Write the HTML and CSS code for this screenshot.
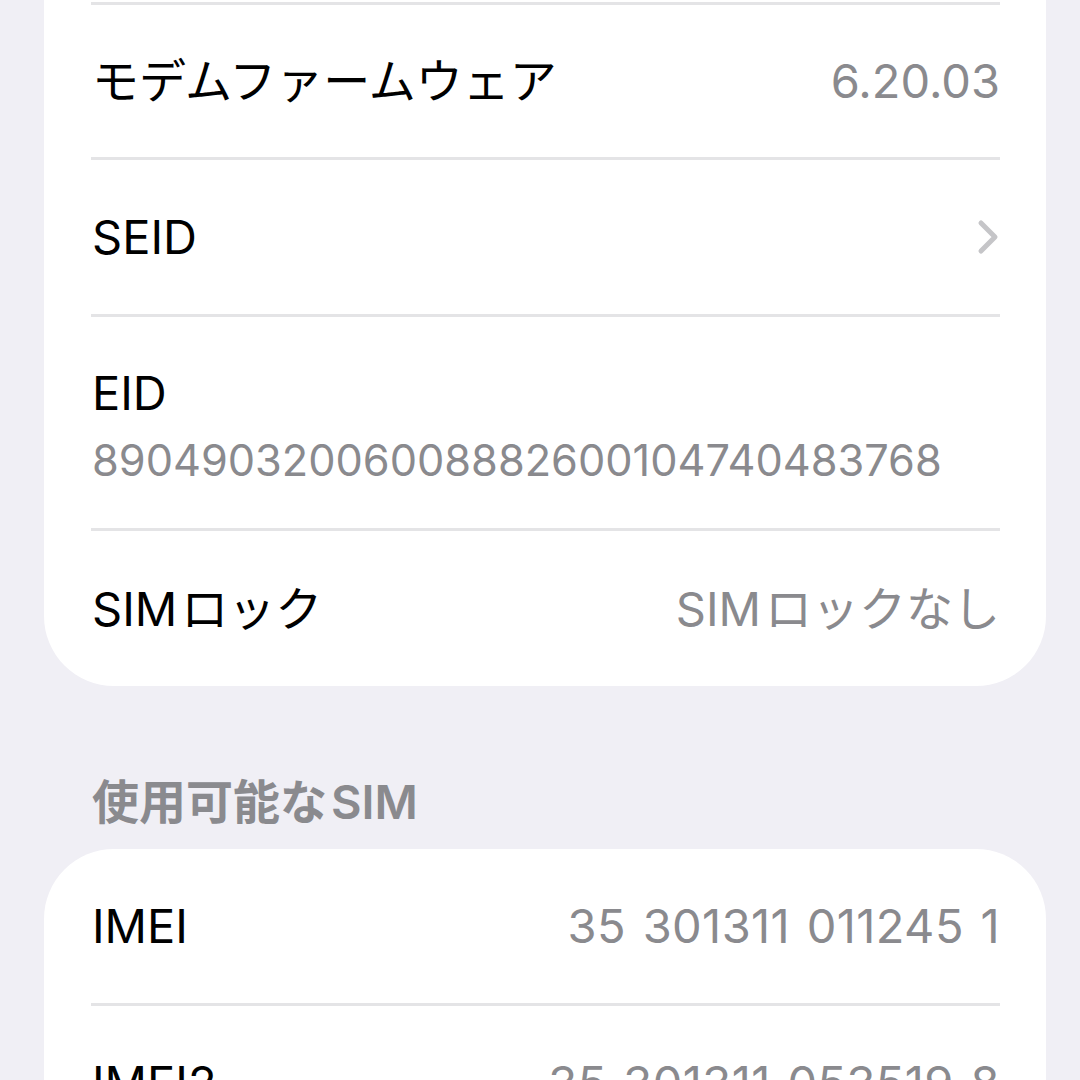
FILE: index.html
```html
<!DOCTYPE html>
<html lang="ja">
<head>
    <meta charset="UTF-8">
    <meta name="viewport" content="width=device-width, initial-scale=1.0">
    <title>情報</title>
    <link rel="stylesheet" href="styles.css">
</head>
<body>
    <div class="page">
        <div class="group group-top">
            <div class="row first">
                <span class="label">モデムファームウェア</span>
                <span class="value">6.20.03</span>
            </div>
            <div class="row">
                <span class="label">SEID</span>
                <svg class="chevron" width="22" height="36" viewBox="0 0 22 36">
                    <polyline points="4,4 18,18 4,32" fill="none" stroke="#c5c5c8" stroke-width="5" stroke-linecap="round" stroke-linejoin="round"/>
                </svg>
            </div>
            <div class="row stacked">
                <span class="label">EID</span>
                <span class="sub">89049032006008882600104740483768</span>
            </div>
            <div class="row">
                <span class="label"><span class="latin">SIM</span>ロック</span>
                <span class="value"><span class="latin">SIM</span>ロックなし</span>
            </div>
        </div>

        <div class="section-title">使用可能な<span class="latin-before">SIM</span></div>

        <div class="group">
            <div class="row">
                <span class="label">IMEI</span>
                <span class="value num">35 301311 011245 1</span>
            </div>
            <div class="row">
                <span class="label">IMEI2</span>
                <span class="value num">35 301311 053519 8</span>
            </div>
        </div>
    </div>
</body>
</html>
```

FILE: styles.css
```css
* {
    box-sizing: border-box;
    margin: 0;
    padding: 0;
}
body {
    background-color: #f0eff5;
    color: #000;
    font-family: Inter, "Noto Sans CJK JP", sans-serif;
    overflow: hidden;
}
.page {
    padding: 0 34px 0 44px;
}
.group {
    background-color: white;
    border-radius: 70px;
    padding: 0 46px 0 47px;
}
.group-top {
    border-radius: 0 0 70px 70px;
    padding-top: 2px;
}
.row {
    display: flex;
    align-items: center;
    justify-content: space-between;
    height: 157px;
    border-bottom: 3px solid #e4e4e6;
    font-size: 47px;
    line-height: 60px;
}
.group-top .row:last-child {
    border-bottom: none;
    height: 155px;
}
.row.first {
    height: 158px;
    border-top: 3px solid #e4e4e6;
}
.label {
    padding-left: 1px;
}
.value {
    color: #8a8a8e;
}
.value.num {
    word-spacing: 3px;
    letter-spacing: 0.4px;
}
.latin {
    margin-right: 4px;
}
.latin-before {
    margin-left: 4px;
}
.chevron {
    margin-right: 1px;
}
.row.stacked {
    flex-direction: column;
    align-items: flex-start;
    justify-content: flex-start;
    height: 214px;
    padding-top: 46px;
}
.sub {
    color: #8a8a8e;
    font-size: 43.3px;
    line-height: 56px;
    margin-top: 9px;
    padding-left: 1px;
}
.section-title {
    color: #8a8a8e;
    font-size: 47px;
    font-weight: 600;
    line-height: 60px;
    padding-left: 48px;
    margin: 86px 0 17px;
}
```
